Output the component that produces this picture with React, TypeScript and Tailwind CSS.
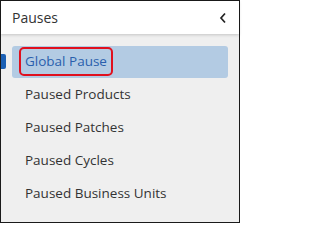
const ITEMS = [
  "Global Pause",
  "Paused Products",
  "Paused Patches",
  "Paused Cycles",
  "Paused Business Units",
];

export default function App() {
  return (
    <div className="w-[240px] h-[223px] border border-[#1a1a1a] bg-[#efefef] flex flex-col font-['Open_Sans',sans-serif] text-[#333]">
      {/* Header */}
      <header className="h-[33px] bg-white flex items-center justify-between pl-[11px] pr-[12px] shadow-[0_1px_3px_rgba(0,0,0,0.18)] z-10">
        <span className="text-[14px]">Pauses</span>
        <svg width="8" height="12" viewBox="0 0 8 12" className="text-[#222]">
          <polyline points="6,1.5 2,6 6,10.5" fill="none" stroke="currentColor" strokeWidth="1.7" />
        </svg>
      </header>

      {/* Menu */}
      <nav className="flex flex-col pt-[11px]">
        {ITEMS.map((label, i) => {
          const active = i === 0;
          return (
            <div key={label} className="relative h-[33px] flex items-center">
              {active && (
                <div className="absolute left-0 top-[9px] w-[5px] h-[15px] bg-[#1a5fb4] rounded-r-[2px]" />
              )}
              <div
                className={`ml-[11px] mr-[11px] flex-1 h-[32px] flex items-center px-[8px] rounded-[3px] ${
                  active ? "bg-[#b3cbe3]" : ""
                }`}
              >
                {active ? (
                  <span className="text-[13.5px] text-[#2a5fad] border-2 border-[#e0101e] rounded-[5px] px-[4px] py-[2px] -ml-[1px]">
                    {label}
                  </span>
                ) : (
                  <span className="text-[13.5px] pl-[5px]">{label}</span>
                )}
              </div>
            </div>
          );
        })}
      </nav>
    </div>
  );
}
